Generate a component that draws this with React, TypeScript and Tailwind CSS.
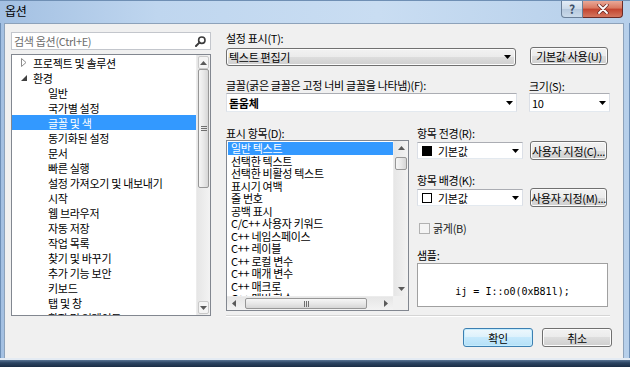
import React from "react";

const ui = "font-['Noto_Sans_CJK_KR','Noto_Sans',sans-serif] text-[11px] tracking-[-0.3px] leading-[14px]";

const treeItems = [
  { label: "프로젝트 및 솔루션", level: 0, arrow: "collapsed" },
  { label: "환경", level: 0, arrow: "expanded" },
  { label: "일반", level: 1 },
  { label: "국가별 설정", level: 1 },
  { label: "글꼴 및 색", level: 1, selected: true },
  { label: "동기화된 설정", level: 1 },
  { label: "문서", level: 1 },
  { label: "빠른 실행", level: 1 },
  { label: "설정 가져오기 및 내보내기", level: 1 },
  { label: "시작", level: 1 },
  { label: "웹 브라우저", level: 1 },
  { label: "자동 저장", level: 1 },
  { label: "작업 목록", level: 1 },
  { label: "찾기 및 바꾸기", level: 1 },
  { label: "추가 기능 보안", level: 1 },
  { label: "키보드", level: 1 },
  { label: "탭 및 창", level: 1 },
  { label: "확장 및 업데이트", level: 1 },
];

const displayItems = [
  "일반 텍스트",
  "선택한 텍스트",
  "선택한 비활성 텍스트",
  "표시기 여백",
  "줄 번호",
  "공백 표시",
  "C/C++ 사용자 키워드",
  "C++ 네임스페이스",
  "C++ 레이블",
  "C++ 로컬 변수",
  "C++ 매개 변수",
  "C++ 매크로",
  "C++ 멤버 함수",
];

function DropArrow() {
  return (
    <svg width="7" height="4" viewBox="0 0 7 4" className="shrink-0">
      <path d="M0 0h7L3.5 4z" fill="#000" />
    </svg>
  );
}

function ScrollBtn(props: { dir: "up" | "down" | "left" | "right"; className?: string }) {
  const { dir, className = "" } = props;
  const paths = {
    up: "M0 4L3.5 0L7 4z",
    down: "M0 0h7L3.5 4z",
    left: "M4 0v7L0 3.5z",
    right: "M0 0v7L4 3.5z",
  };
  const horiz = dir === "left" || dir === "right";
  return (
    <div className={`flex items-center justify-center shrink-0 ${className}`}>
      <svg width={horiz ? 4 : 7} height={horiz ? 7 : 4} viewBox={horiz ? "0 0 4 7" : "0 0 7 4"}>
        <path d={paths[dir]} fill="#5a5a5a" />
      </svg>
    </div>
  );
}

function Button(props: { children: React.ReactNode; className?: string; primary?: boolean }) {
  const { children, className = "", primary } = props;
  return (
    <div
      className={`flex items-center justify-center rounded-[3px] border text-black ${
        primary
          ? "border-[#3c7fb1] bg-[linear-gradient(#eef8fd,#dcf1fc_50%,#c6e9fc_50%,#b4e0f7)] shadow-[inset_0_0_0_1px_#c4ecfe]"
          : "border-[#707070] bg-[linear-gradient(#f2f2f2,#ebebeb_50%,#dddddd_50%,#cfcfcf)] shadow-[inset_0_0_0_1px_#fcfcfc]"
      } ${className}`}
    >
      {children}
    </div>
  );
}

function WhiteCombo(props: { children: React.ReactNode; className?: string }) {
  return (
    <div
      className={`flex items-center bg-white border border-[#abadb3] border-x-[#dbdfe6] border-b-[#e3e9ef] ${props.className ?? ""}`}
    >
      <div className="flex-1 flex items-center min-w-0">{props.children}</div>
      <div className="pr-[3px] pl-[2px]">
        <DropArrow />
      </div>
    </div>
  );
}

function TreeArrow(props: { kind: string }) {
  if (props.kind === "collapsed") {
    return (
      <svg width="6" height="9" viewBox="0 0 6 9">
        <path d="M0.5 0.5L5 4.5L0.5 8.5z" fill="#fff" stroke="#8c8c8c" />
      </svg>
    );
  }
  return (
    <svg width="6" height="6" viewBox="0 0 6 6">
      <path d="M6 0V6H0z" fill="#404040" />
    </svg>
  );
}

function Options() {
  return (
    <div className="flex pl-[6px] pt-[8px]">
      {/* left column */}
      <div className="w-[200px] flex flex-col">
        <div className="h-[18px] bg-white border border-[#c3c6cc] flex items-center pl-[2px] pr-[4px]">
          <span className="flex-1 text-[#6d6d6d]">검색 옵션(Ctrl+E)</span>
          <svg width="11" height="11" viewBox="0 0 11 11">
            <circle cx="6.8" cy="4.2" r="3.2" fill="none" stroke="#3c3c3c" strokeWidth="1.6" />
            <path d="M4.6 6.4L1 10" stroke="#3c3c3c" strokeWidth="2" strokeLinecap="round" />
          </svg>
        </div>
        <div className="mt-[4px] h-[262px] bg-white border border-[#828790] flex overflow-hidden">
          <div className="w-[184px] flex flex-col">
            {treeItems.map((item) => (
              <div
                key={item.label}
                className={`h-[15px] shrink-0 flex items-center ${
                  item.selected ? "bg-[#3399ff] text-white" : "text-black"
                }`}
              >
                {item.level === 0 ? (
                  <>
                    <div className="w-[21px] pl-[9px] flex items-center">
                      <TreeArrow kind={item.arrow ?? ""} />
                    </div>
                    <span className="whitespace-nowrap">{item.label}</span>
                  </>
                ) : (
                  <span className="pl-[36px] whitespace-nowrap">{item.label}</span>
                )}
              </div>
            ))}
          </div>
          <div className="w-[14px] flex flex-col bg-[linear-gradient(90deg,#e6e6e6,#f3f3f3)] border-l border-[#ececec]">
            <ScrollBtn dir="up" className="h-[13px] mx-[1px] mt-[1px] border border-[#c9c9c9] rounded-[2px] bg-[#f4f4f4]" />
            <div className="h-[119px] mx-[1px] rounded-[2px] border border-[#979797] bg-[linear-gradient(90deg,#f6f6f6,#e8e8e8_50%,#d6d6d6)] flex items-center justify-center">
              <svg width="6" height="5" viewBox="0 0 6 5">
                <path d="M0 0.5h6M0 2.5h6M0 4.5h6" stroke="#6f6f6f" strokeWidth="1" />
              </svg>
            </div>
            <div className="flex-1" />
            <ScrollBtn dir="down" className="h-[13px] mx-[1px] mb-[1px] border border-[#c9c9c9] rounded-[2px] bg-[#f4f4f4]" />
          </div>
        </div>
      </div>

      {/* right column */}
      <div className="ml-[15px] w-[386px] flex flex-col">
        <div className="h-[14px] -mt-[1px]">설정 표시(T):</div>
        <div className="mt-[2px] flex items-start">
          <div className="mt-[1px] w-[290px] h-[18px] rounded-[3px] border border-[#707070] bg-[linear-gradient(#f2f2f2,#ebebeb_50%,#dddddd_50%,#cfcfcf)] shadow-[inset_0_0_0_1px_#fcfcfc] flex items-center pl-[2px] pr-[4px]">
            <span className="flex-1">텍스트 편집기</span>
            <DropArrow />
          </div>
          <Button className="ml-[14px] w-[78px] h-[18px]">기본값 사용(U)</Button>
        </div>

        <div className="mt-[12px] flex h-[14px]">
          <span className="w-[303px] whitespace-nowrap">글꼴(굵은 글꼴은 고정 너비 글꼴을 나타냄)(F):</span>
          <span className="pt-[1px]">크기(S):</span>
        </div>
        <div className="mt-[1px] flex">
          <WhiteCombo className="w-[291px] h-[19px] pl-[2px]">
            <span className="font-bold">돋움체</span>
          </WhiteCombo>
          <WhiteCombo className="ml-[12px] w-[81px] h-[19px] pl-[2px]">
            <span>10</span>
          </WhiteCombo>
        </div>

        <div className="mt-[14px] flex">
          {/* display items */}
          <div className="w-[183px] flex flex-col">
            <div className="h-[14px]">표시 항목(D):</div>
            <div className="h-[171px] bg-white border border-[#828790] flex flex-col">
              <div className="h-[155px] flex">
                <div className="w-[166px] pl-[1px] pt-[1px] overflow-hidden flex flex-col">
                  {displayItems.map((item, i) => (
                    <div
                      key={item}
                      className={`h-[12.5px] leading-[12.5px] shrink-0 pl-[3px] whitespace-nowrap ${
                        i === 0 ? "bg-[#3399ff] text-white" : "text-black"
                      }`}
                    >
                      {item}
                    </div>
                  ))}
                </div>
                <div className="w-[15px] flex flex-col bg-[linear-gradient(90deg,#e6e6e6,#f3f3f3)] border-l border-[#ececec]">
                  <ScrollBtn dir="up" className="h-[14px]" />
                  <div className="h-[2px]" />
                  <div className="h-[13px] mx-[1px] rounded-[2px] border border-[#979797] bg-[linear-gradient(90deg,#f6f6f6,#e8e8e8_50%,#d6d6d6)]" />
                  <div className="flex-1" />
                  <ScrollBtn dir="down" className="h-[14px]" />
                </div>
              </div>
              <div className="h-[14px] flex">
                <div className="w-[166px] flex bg-[linear-gradient(#e6e6e6,#f3f3f3)] border-t border-[#ececec]">
                  <ScrollBtn dir="left" className="w-[14px]" />
                  <div className="w-[4px]" />
                  <div className="w-[122px] my-[1px] rounded-[2px] border border-[#979797] bg-[linear-gradient(#f6f6f6,#e8e8e8_50%,#d6d6d6)] flex items-center justify-center">
                    <svg width="5" height="6" viewBox="0 0 5 6">
                      <path d="M0.5 0v6M2.5 0v6M4.5 0v6" stroke="#6f6f6f" strokeWidth="1" />
                    </svg>
                  </div>
                  <div className="flex-1" />
                  <ScrollBtn dir="right" className="w-[14px]" />
                </div>
                <div className="w-[15px] bg-[#f0f0f0]" />
              </div>
            </div>
          </div>

          {/* colors */}
          <div className="ml-[8px] w-[193px] flex flex-col">
            <div className="h-[14px]">항목 전경(R):</div>
            <div className="mt-[1px] h-[19px] flex items-center">
              <WhiteCombo className="w-[106px] h-[17px] pl-[4px]">
                <span className="w-[10px] h-[10px] bg-black shrink-0" />
                <span className="ml-[6px]">기본값</span>
              </WhiteCombo>
              <Button className="ml-[7px] w-[77px] h-[19px] whitespace-nowrap">사용자 지정(C)...</Button>
            </div>
            <div className="mt-[13px] h-[14px]">항목 배경(K):</div>
            <div className="mt-[1px] h-[19px] flex items-center">
              <WhiteCombo className="w-[106px] h-[17px] pl-[4px]">
                <span className="w-[10px] h-[10px] bg-white border border-black shrink-0" />
                <span className="ml-[6px]">기본값</span>
              </WhiteCombo>
              <Button className="ml-[7px] w-[77px] h-[19px] whitespace-nowrap">사용자 지정(M)...</Button>
            </div>
            <div className="mt-[14px] h-[14px] flex items-center">
              <span className="ml-[2px] w-[11px] h-[11px] border border-[#b1b1b1] bg-[#f4f4f4] shrink-0" />
              <span className="ml-[3px] text-[#222]">굵게(B)</span>
            </div>
            <div className="mt-[13px] h-[14px]">샘플:</div>
            <div className="mt-[1px] w-[191px] h-[44px] bg-white border border-[#a0a0a0] flex justify-center pt-[22px]">
              <span className="font-['DejaVu_Sans_Mono',monospace] text-[10px] leading-[11px] tracking-normal text-black whitespace-pre">
                ij = I::o0(0xB81l);
              </span>
            </div>
          </div>
        </div>

        <div className="mt-[4px] w-[384px] h-[2px] border-t border-[#d5d5d5] border-b border-b-white" />

        <div className="mt-[11px] flex justify-end gap-[9px]">
          <Button primary className="w-[70px] h-[19px]">확인</Button>
          <Button className="w-[70px] h-[19px]">취소</Button>
        </div>
      </div>
    </div>
  );
}

export default function App() {
  return (
    <div
      className={`w-[630px] h-[367px] overflow-hidden flex flex-col bg-[linear-gradient(90deg,#a3c0e2,#bfd6ef_25%,#c9ddf2_60%,#b6cfea)] text-black ${ui}`}
    >
      {/* title bar */}
      <div className="h-[23px] shrink-0 flex items-start border-t border-[#6f8fb4]">
        <span className="pl-[5px] pt-[3px] text-[12px] text-black">옵션</span>
        <div className="ml-auto mr-[7px] flex">
          <div className="w-[22px] h-[17px] rounded-bl-[4px] border border-t-0 border-[#6a7f98] bg-[linear-gradient(#e3ecf6,#cbd9e8_50%,#b5c8dd_50%,#cadaea)] flex items-center justify-center">
            <span className="text-[12px] font-bold text-[#3d5068] leading-[12px]">?</span>
          </div>
          <div className="w-[40px] h-[17px] rounded-br-[4px] border border-t-0 border-l-0 border-[#6b2a26] bg-[linear-gradient(#e9a897,#d9775f_45%,#c2432e_50%,#d4765f)] flex items-center justify-center">
            <svg width="12" height="10" viewBox="0 0 12 10">
              <path d="M2 1L10 9M10 1L2 9" stroke="#6b2a26" strokeWidth="3.4" strokeLinecap="round" />
              <path d="M2 1L10 9M10 1L2 9" stroke="#ffffff" strokeWidth="1.8" strokeLinecap="round" />
            </svg>
          </div>
        </div>
      </div>

      <div className="flex h-[335px] shrink-0">
        <div className="w-[4px] border-l border-[#6d8fb7]" />
        <div className="w-[620px] border border-b-0 border-[#8da2ba] bg-[#f0f0f0]">
          <Options />
        </div>
        <div className="w-[6px] border-r border-[#6d8fb7]" />
      </div>

      <div className="h-[9px] shrink-0 flex flex-col">
        <div className="h-[2px] bg-[#e4ebf3]" />
        <div className="flex-1 bg-[linear-gradient(#5a7594,#2c4563_40%,#1a2d45)]" />
      </div>
    </div>
  );
}
